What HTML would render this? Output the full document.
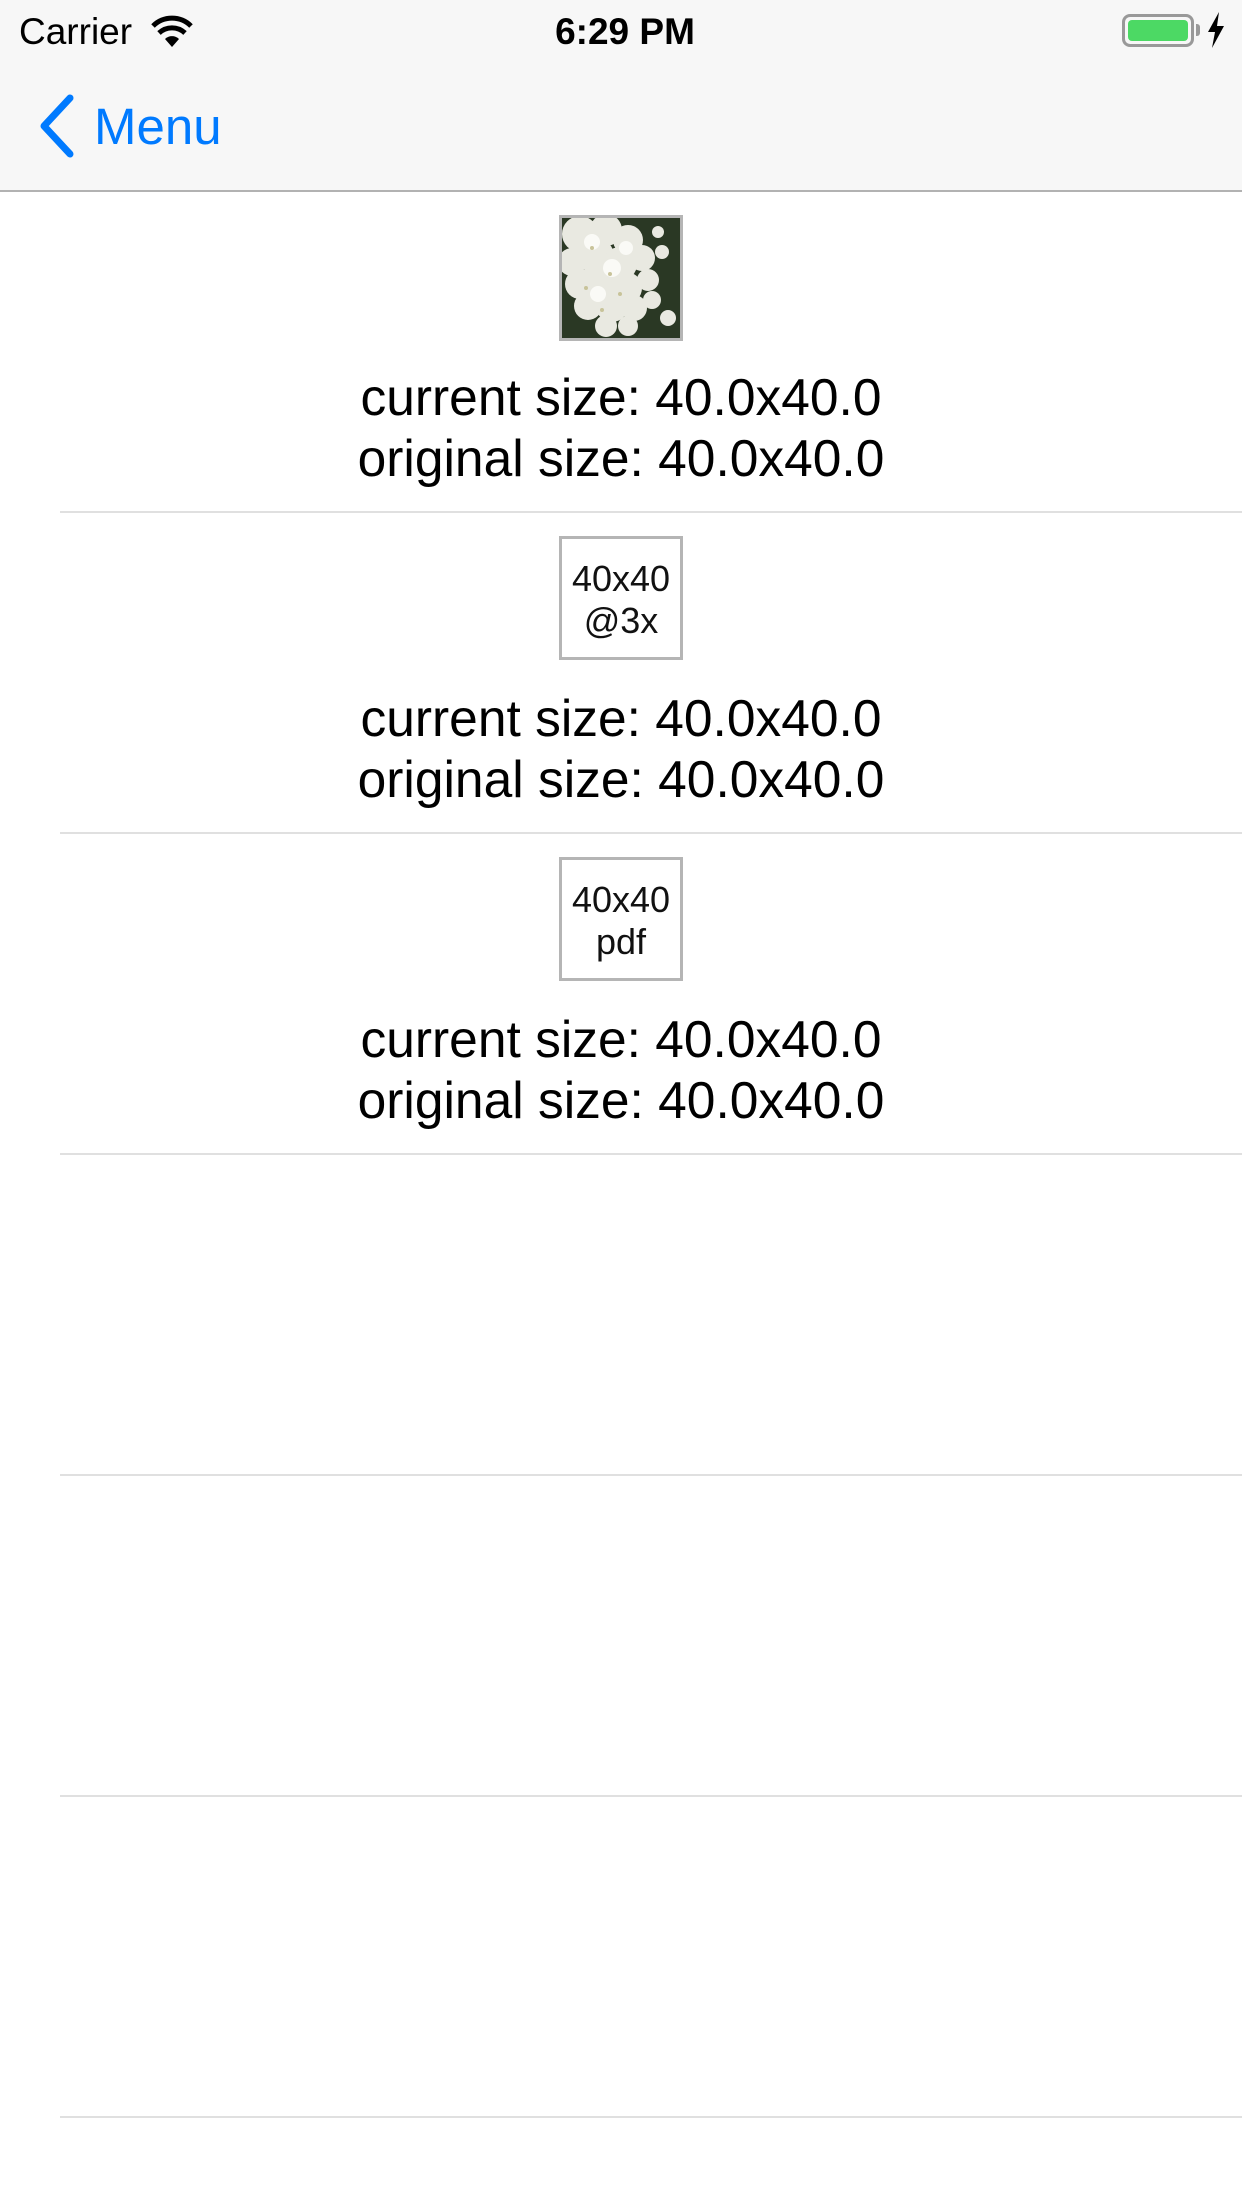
<!DOCTYPE html>
<html><head><meta charset="utf-8"><style>
*{margin:0;padding:0;box-sizing:border-box}
body{width:1242px;height:2208px;background:#fff;font-family:"Liberation Sans",sans-serif;position:relative;overflow:hidden}
.bar{position:absolute;left:0;top:0;width:1242px;height:192px;background:#f7f7f7;border-bottom:2px solid #b2b2b2}
.abs{position:absolute}
.sep{position:absolute;left:60px;right:0;height:2px;background:#e0e0e0}
.box{position:absolute;left:559px;width:124px;height:124px;border:3px solid #b5b5b5;text-align:center;font-size:36px;line-height:42px;padding-top:19px;color:#111}
.txt{position:absolute;left:0;width:1242px;text-align:center;font-size:51.5px;line-height:61px;color:#000}
</style></head><body>
<div class="bar">
 <div class="abs" style="left:19px;top:11px;font-size:37px;color:#000">Carrier</div>
 <svg class="abs" style="left:150px;top:14px" width="44" height="36" viewBox="0 0 44 36">
  <path d="M22 33 L15 25 A10 10 0 0 1 29 25 Z" fill="#000"/>
  <path d="M9 19 A19 19 0 0 1 35 19" fill="none" stroke="#000" stroke-width="5"/>
  <path d="M3 12 A27 27 0 0 1 41 12" fill="none" stroke="#000" stroke-width="5"/>
 </svg>
 <div class="abs" style="left:0;width:1242px;text-align:center;top:11px;font-size:37px;font-weight:bold;padding-left:8px">6:29 PM</div>
 <div class="abs" style="left:1122px;top:14px;width:72px;height:33px;border:3px solid #999;border-radius:8px;padding:3px"><div style="width:100%;height:100%;background:#4cd964;border-radius:4px"></div></div>
 <div class="abs" style="left:1196px;top:24px;width:4px;height:12px;background:#999;border-radius:0 3px 3px 0"></div>
 <svg class="abs" style="left:1206px;top:12px" width="20" height="36" viewBox="0 0 20 36"><path d="M13 0 L2 20 H9 L6 36 L18 14 H11 Z" fill="#000"/></svg>
 <svg class="abs" style="left:36px;top:94px" width="42" height="64" viewBox="0 0 42 64"><path d="M34 4 L8 32 L34 60" fill="none" stroke="#007aff" stroke-width="7" stroke-linecap="round" stroke-linejoin="round"/></svg>
 <div class="abs" style="left:94px;top:97px;font-size:51px;color:#007aff">Menu</div>
</div>

<div class="abs" style="left:559px;top:215px;width:124px;height:126px;border:3px solid #b5b5b5;background:#2a3824;overflow:hidden">
 <svg width="118" height="120" viewBox="0 0 118 120" style="display:block">
  <g fill="#e9e9e1">
   <circle cx="18" cy="16" r="18"/><circle cx="44" cy="12" r="16"/><circle cx="66" cy="22" r="15"/><circle cx="10" cy="44" r="14"/>
   <circle cx="34" cy="38" r="18"/><circle cx="58" cy="46" r="17"/><circle cx="80" cy="40" r="13"/><circle cx="18" cy="66" r="15"/>
   <circle cx="42" cy="64" r="18"/><circle cx="64" cy="70" r="16"/><circle cx="86" cy="62" r="11"/><circle cx="26" cy="88" r="14"/>
   <circle cx="50" cy="88" r="16"/><circle cx="72" cy="90" r="13"/><circle cx="90" cy="82" r="9"/><circle cx="44" cy="108" r="11"/><circle cx="66" cy="108" r="10"/>
   <circle cx="100" cy="34" r="7"/><circle cx="106" cy="100" r="8"/><circle cx="96" cy="14" r="6"/>
  </g>
  <g fill="#fafaf6"><circle cx="30" cy="24" r="8"/><circle cx="50" cy="50" r="9"/><circle cx="36" cy="76" r="8"/><circle cx="64" cy="30" r="7"/></g>
  <g fill="#c8c39a"><circle cx="30" cy="30" r="2"/><circle cx="48" cy="56" r="2"/><circle cx="24" cy="70" r="2"/><circle cx="58" cy="76" r="2"/><circle cx="40" cy="92" r="2"/></g>
 </svg>
</div>
<div class="txt" style="top:367px">current size: 40.0x40.0<br>original size: 40.0x40.0</div>
<div class="sep" style="top:511px"></div>

<div class="box" style="top:536px">40x40<br>@3x</div>
<div class="txt" style="top:688px">current size: 40.0x40.0<br>original size: 40.0x40.0</div>
<div class="sep" style="top:832px"></div>

<div class="box" style="top:857px">40x40<br>pdf</div>
<div class="txt" style="top:1009px">current size: 40.0x40.0<br>original size: 40.0x40.0</div>
<div class="sep" style="top:1153px"></div>

<div class="sep" style="top:1474px"></div>
<div class="sep" style="top:1795px"></div>
<div class="sep" style="top:2116px"></div>
</body></html>
